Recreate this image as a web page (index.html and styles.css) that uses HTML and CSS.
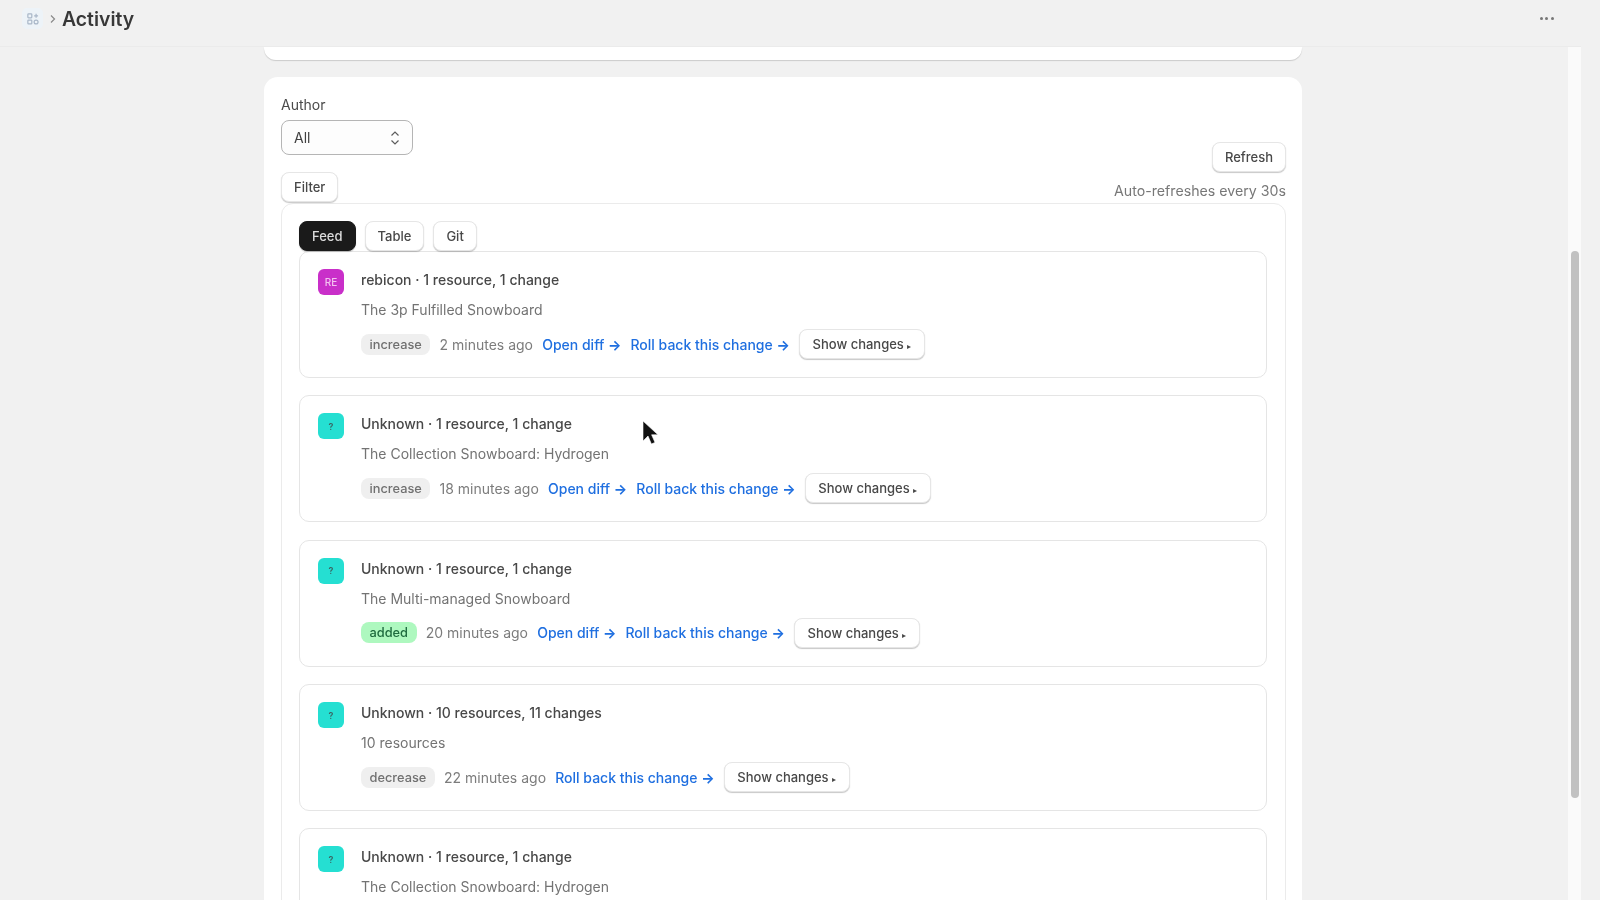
FILE: index.html
```html
<!DOCTYPE html>
<html lang="en">
<head>
    <meta charset="UTF-8">
    <meta name="viewport" content="width=device-width, initial-scale=1.0">
    <title>Activity</title>
    <link rel="stylesheet" href="styles.css">
</head>
<body>
    <div class="app">
        <header class="topbar">
            <div class="crumbs">
                <span class="appIcon">
                    <svg width="12" height="12" viewBox="0 0 14 14" fill="none" stroke="#a9b7c8" stroke-width="1.4">
                        <rect x="1" y="1" width="4.6" height="4.6" rx="0.8"/>
                        <rect x="1" y="8.2" width="4.6" height="4.6" rx="0.8"/>
                        <circle cx="10.6" cy="10.5" r="2.3"/>
                        <path d="M10.6 1v4.6M8.3 3.3h4.6"/>
                    </svg>
                </span>
                <svg class="chevron" width="8" height="12" viewBox="0 0 8 12" fill="none" stroke="#8a8a8a" stroke-width="1.2">
                    <path d="M2 2.5 5.5 6 2 9.5"/>
                </svg>
                <h1 class="pageTitle">Activity</h1>
            </div>
            <div class="dots"><i></i><i></i><i></i></div>
        </header>

        <main class="content">
            <div class="cardStub"></div>
            <section class="card">
                <div class="toolbar">
                    <div class="filters">
                        <label class="fieldLabel">Author</label>
                        <div class="select">
                            <span>All</span>
                            <svg width="10" height="16" viewBox="0 0 10 16" fill="none" stroke="#5c5c5c" stroke-width="1.2">
                                <path d="M1.5 5.5 5 2l3.5 3.5M1.5 10.5 5 14l3.5-3.5"/>
                            </svg>
                        </div>
                        <button type="button" class="btn">Filter</button>
                    </div>
                    <div class="refresh">
                        <button type="button" class="btn">Refresh</button>
                        <p class="autoNote">Auto-refreshes every 30s</p>
                    </div>
                </div>

                <div class="panel">
                    <div class="tabs">
                        <button type="button" class="btn tabActive">Feed</button>
                        <button type="button" class="btn">Table</button>
                        <button type="button" class="btn">Git</button>
                    </div>

                    <article class="item">
                        <span class="avatar avatarRe">RE</span>
                        <div class="itemBody">
                            <p class="itemTitle">rebicon · 1 resource, 1 change</p>
                            <p class="itemSub">The 3p Fulfilled Snowboard</p>
                            <div class="meta">
                                <span class="pill">increase</span>
                                <span class="time">2 minutes ago</span>
                                <a class="link" href="#">Open diff <span class="arrow">→</span></a>
                                <a class="link" href="#">Roll back this change <span class="arrow">→</span></a>
                                <button type="button" class="btn">Show changes <small>▸</small></button>
                            </div>
                        </div>
                    </article>

                    <article class="item">
                        <span class="avatar">?</span>
                        <div class="itemBody">
                            <p class="itemTitle">Unknown · 1 resource, 1 change</p>
                            <p class="itemSub">The Collection Snowboard: Hydrogen</p>
                            <div class="meta">
                                <span class="pill">increase</span>
                                <span class="time">18 minutes ago</span>
                                <a class="link" href="#">Open diff <span class="arrow">→</span></a>
                                <a class="link" href="#">Roll back this change <span class="arrow">→</span></a>
                                <button type="button" class="btn">Show changes <small>▸</small></button>
                            </div>
                        </div>
                    </article>

                    <article class="item">
                        <span class="avatar">?</span>
                        <div class="itemBody">
                            <p class="itemTitle">Unknown · 1 resource, 1 change</p>
                            <p class="itemSub">The Multi-managed Snowboard</p>
                            <div class="meta">
                                <span class="pill pillAdded">added</span>
                                <span class="time">20 minutes ago</span>
                                <a class="link" href="#">Open diff <span class="arrow">→</span></a>
                                <a class="link" href="#">Roll back this change <span class="arrow">→</span></a>
                                <button type="button" class="btn">Show changes <small>▸</small></button>
                            </div>
                        </div>
                    </article>

                    <article class="item">
                        <span class="avatar">?</span>
                        <div class="itemBody">
                            <p class="itemTitle">Unknown · 10 resources, 11 changes</p>
                            <p class="itemSub">10 resources</p>
                            <div class="meta">
                                <span class="pill">decrease</span>
                                <span class="time">22 minutes ago</span>
                                <a class="link" href="#">Roll back this change <span class="arrow">→</span></a>
                                <button type="button" class="btn">Show changes <small>▸</small></button>
                            </div>
                        </div>
                    </article>

                    <article class="item">
                        <span class="avatar">?</span>
                        <div class="itemBody">
                            <p class="itemTitle">Unknown · 1 resource, 1 change</p>
                            <p class="itemSub">The Collection Snowboard: Hydrogen</p>
                        </div>
                    </article>
                </div>
            </section>
        </main>

        <div class="scrollbar"><div class="scrollThumb"></div></div>

        <svg class="cursor" width="17" height="26" viewBox="0 0 17 26">
            <path d="M1 1v20l5-5 3.4 8 3.6-1.6-3.4-7.6H16z" fill="#111" stroke="#fff" stroke-width="0.6"/>
        </svg>
    </div>
</body>
</html>
```

FILE: styles.css
```css
* {
    box-sizing: border-box;
}
html, body {
    height: 100%;
}
body {
    margin: 0;
    overflow: hidden;
    background: #f1f1f1;
    color: #303030;
    font-family: Inter, "Liberation Sans", sans-serif;
    font-size: 13.3px;
}
p, h1 {
    margin: 0;
}
.app {
    position: relative;
    height: 900px;
    overflow: hidden;
    filter: blur(0.6px);
}

/* top bar */
.topbar {
    height: 47px;
    width: 1581px;
    padding: 0 27px 9px 22px;
    display: flex;
    justify-content: space-between;
    align-items: center;
    border-bottom: 1px solid #ebebeb;
}
.crumbs {
    display: flex;
    align-items: center;
}
.appIcon {
    width: 21px;
    height: 21px;
    border-radius: 5px;
    background: #edf3f8;
    display: flex;
    justify-content: center;
    align-items: center;
}
.chevron {
    margin: 0 5px 0 6px;
}
.pageTitle {
    font-size: 19.4px;
    font-weight: 600;
    color: #383838;
}
.dots {
    display: flex;
    gap: 2.6px;
}
.dots i {
    width: 3px;
    height: 3px;
    border-radius: 50%;
    background: #777;
}

/* main column */
.content {
    width: 1038px;
    margin-left: 264px;
}
.cardStub {
    height: 13px;
    background: white;
    border-radius: 0 0 12px 12px;
    box-shadow: 0 1px 1px rgba(0, 0, 0, 0.16);
    margin-bottom: 17px;
}
.card {
    background: white;
    border-radius: 14px;
    padding: 18px 16px 0 17px;
}
.toolbar {
    display: flex;
    justify-content: space-between;
    align-items: flex-end;
}
.fieldLabel {
    display: block;
    font-size: 14px;
    line-height: 20px;
    margin-bottom: 5px;
    color: #4a4a4a;
}
.select {
    width: 132px;
    height: 35px;
    border: 1px solid #b5b5b5;
    border-radius: 8px;
    padding: 0 12px 0 12px;
    margin-bottom: 17px;
    display: flex;
    justify-content: space-between;
    align-items: center;
    font-size: 14px;
    color: #404040;
    background: #fdfdfd;
}
.btn {
    height: 30px;
    padding: 0 12px;
    border: 1px solid #e6e6e6;
    border-radius: 8px;
    background: white;
    box-shadow: 0 1px 1px rgba(0, 0, 0, 0.22);
    color: #484848;
    font-family: inherit;
    font-size: 13px;
    font-weight: 500;
    cursor: pointer;
}
.btn small {
    font-size: 8px;
}
.refresh {
    display: flex;
    flex-direction: column;
    align-items: flex-end;
    gap: 9px;
}
.autoNote {
    color: #777;
    font-size: 14.2px;
    line-height: 20px;
    margin-bottom: 1px;
}

/* feed */
.panel {
    margin-top: 1px;
    border: 1px solid #ebebeb;
    border-radius: 12px;
    padding: 17px 18px 17px 17px;
}
.tabs {
    display: flex;
    gap: 9px;
    height: 30px;
}
.tabActive {
    background: #1a1a1a;
    border-color: #1a1a1a;
    color: #dcdcdc;
}
.item {
    display: flex;
    gap: 17px;
    height: 127px;
    padding: 17px 17px 17px 18px;
    margin-bottom: 17.35px;
    border: 1px solid #e5e5e5;
    border-radius: 10px;
}
.avatar {
    width: 26px;
    height: 26px;
    flex-shrink: 0;
    border-radius: 6px;
    background: #25dfd2;
    color: #3a6664;
    font-size: 9px;
    font-weight: 600;
    display: flex;
    justify-content: center;
    align-items: center;
}
.avatarRe {
    background: #c92fc9;
    color: #f3c2f0;
    font-size: 10px;
    font-weight: 500;
}
.itemBody {
    padding-top: 1px;
}
.itemTitle {
    font-size: 14px;
    font-weight: 500;
    line-height: 20px;
    margin-bottom: 10px;
    color: #484848;
}
.itemSub {
    font-size: 14px;
    line-height: 20px;
    margin-bottom: 9px;
    color: #737373;
}
.meta {
    display: flex;
    align-items: center;
    gap: 9.2px;
}
.meta .btn {
    padding: 0 12.5px;
}
.pill {
    height: 21px;
    padding: 0 8.5px;
    border-radius: 8px;
    background: #efefef;
    color: #707070;
    font-size: 12.8px;
    font-weight: 500;
    line-height: 21px;
}
.pillAdded {
    background: #aef8bf;
    color: #1f6b3f;
}
.time {
    color: #7c7c7c;
    font-size: 14px;
}
.link {
    color: #1f6fe0;
    font-size: 14px;
    font-weight: 500;
    text-decoration: none;
}
.arrow {
    font-size: 14px;
    font-weight: 700;
}

/* things lying on top */
.scrollbar {
    position: absolute;
    top: 47px;
    left: 1568px;
    width: 13px;
    bottom: 0;
    background: #fafafa;
}
.scrollThumb {
    position: absolute;
    top: 204px;
    left: 3px;
    width: 8px;
    height: 547px;
    border-radius: 4px;
    background: #c1c1c1;
}
.cursor {
    position: absolute;
    left: 642px;
    top: 420px;
}
```
